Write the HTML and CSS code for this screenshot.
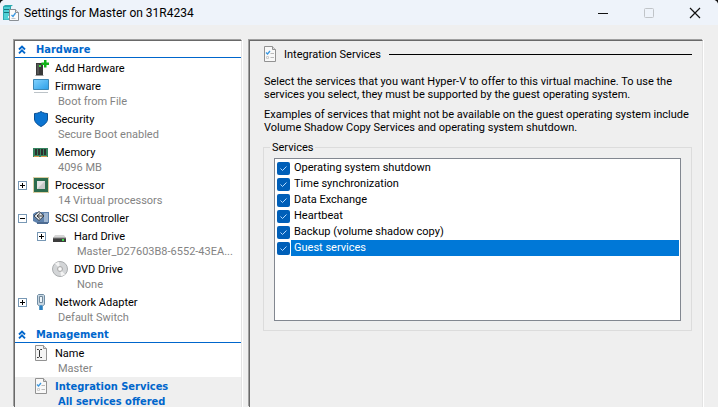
FILE: index.html
```html
<!DOCTYPE html>
<html lang="en">
<head>
<meta charset="utf-8">
<title>Settings for Master on 31R4234</title>
<link rel="stylesheet" href="styles.css">
</head>
<body>
<svg width="0" height="0" class="defs" aria-hidden="true">
  <symbol id="chevrons" viewBox="0 0 8 9"><path d="M1 4.500 4 1.500l3 3M1 8.300l3-3 3 3" fill="none" stroke="#06c" stroke-width="1.900"/></symbol>
  <symbol id="checklist" viewBox="0 0 16 16">
    <path d="M2.500.5h8l3 3v12h-11z" fill="#f8f8f8" stroke="#929292"/>
    <path d="M10.500.5v3h3" fill="#ddd" stroke="#929292"/>
    <path d="M4 6.500 5.500 8 8 5" fill="none" stroke="#3a97e0" stroke-width="1.300"/>
    <path d="M8.500 7.500H12M8.500 11.500H12" stroke="#bbb"/>
    <path d="M4.500 10.500h2v2h-2z" fill="none" stroke="#ccc"/>
  </symbol>
</svg>
<div class="window">
  <header class="titlebar">
    <svg class="app-icon" viewBox="0 0 16 16" aria-hidden="true">
      <path d="M0 1.500 2 0h8L8 1.500V15H0z" fill="#2aa9b0"/>
      <path d="M1 2h6v12.500H1z" fill="#4fd0d6"/>
      <path d="M1 4.500h6M1 7.500h6" stroke="#14747c"/>
      <path d="M5 11h2v2H5z" fill="#d5ffff"/>
      <path d="M6.500 4.500h6l3 3v8h-9z" fill="#fafafa" stroke="#8a8f94"/>
      <path d="M12.500 4.500v3h3" fill="#ddd" stroke="#8a8f94"/>
      <path d="m8.500 10 1.500 1.500L12.500 8" fill="none" stroke="#3a97e0" stroke-width="1.300"/>
      <path d="M8.500 13.500h4" stroke="#c0c4c8"/>
    </svg>
    <h1>Settings for Master on 31R4234</h1>
    <div class="window-controls">
      <button type="button" aria-label="Minimize"><svg viewBox="0 0 12 12"><path d="M1 6.500h10" stroke="#111"/></svg></button>
      <button type="button" aria-label="Maximize" disabled><svg viewBox="0 0 12 12"><rect x="1.500" y="1.500" width="9" height="9" rx="1" fill="none" stroke="#c0c4c8"/></svg></button>
      <button type="button" aria-label="Close"><svg viewBox="0 0 12 12"><path d="m1 1 10 10M11 1 1 11" stroke="#111" stroke-width="1.200"/></svg></button>
    </div>
  </header>
  <div class="panes">
    <nav class="pane tree">
      <h2><button type="button" class="section"><svg viewBox="0 0 8 9"><use href="#chevrons"/></svg>Hardware</button></h2>
      <ul>
        <li class="item">
          <svg class="icon" viewBox="0 0 16 16"><path d="M3 3h7v12H3z" fill="#3a3a3a"/><path d="M4 4h2v10H4z" fill="#555"/><path d="M2.500 15.500h8" stroke="#999"/><path d="M6 5h2v2H6z" fill="#4be04b"/><path d="M11 0h2.500v2.500H16V5h-2.500v2.500H11V5H8.500V2.500H11z" fill="#12b31a"/></svg>
          <a href="#add">Add Hardware</a>
        </li>
        <li class="item">
          <svg class="icon" viewBox="0 0 16 16"><defs><linearGradient id="screen" x2="1" y2="1"><stop stop-color="#83d3ff"/><stop offset="1" stop-color="#2b9fe8"/></linearGradient></defs><path d="M.5 1.500h15v10H.5z" fill="url(#screen)" stroke="#3c87b5"/><path d="M1 14.500h14" stroke="#bcc3c8"/></svg>
          <a href="#firmware">Firmware</a><span class="detail">Boot from File</span>
        </li>
        <li class="item">
          <svg class="icon" viewBox="0 0 16 16"><path d="M8 .5C6 2 3.500 2.500 1.500 2.500V8c0 3.500 3.500 6 6.500 7.500 3-1.500 6.500-4 6.500-7.500V2.500C12.500 2.500 10 2 8 .5z" fill="#0b74d1" stroke="#0a4f93"/></svg>
          <a href="#security">Security</a><span class="detail">Secure Boot enabled</span>
        </li>
        <li class="item">
          <svg class="icon" viewBox="0 0 16 16"><path d="M0 4h15v9H0z" fill="#35835f"/><path d="M2 5h2v6H2zM5 5h2v6H5zM8 5h2v6H8zM11 5h2v6h-2z" fill="#2b2f2d"/><path d="M1 12.500h5M8 12.500h6" stroke="#d99a4e"/></svg>
          <a href="#memory">Memory</a><span class="detail">4096 MB</span>
        </li>
        <li class="item">
          <button type="button" class="expander plus" aria-label="Expand Processor"></button>
          <svg class="icon" viewBox="0 0 16 16"><rect x=".5" y=".5" width="15" height="15" fill="none" stroke="#b59a45" stroke-dasharray="1 1"/><path d="M1 1h14v14H1z" fill="#2b6b4c"/><path d="M4 4h8v8H4z" fill="#e4e4e4"/><path d="M12 4v8H4z" fill="#c9c9c9"/></svg>
          <a href="#processor">Processor</a><span class="detail">14 Virtual processors</span>
        </li>
        <li class="item">
          <button type="button" class="expander" aria-label="Collapse SCSI Controller"></button>
          <svg class="icon" viewBox="0 0 16 16"><path d="M0 4 3 2h13v11H4l-4-2z" fill="#5f82ad"/><path d="M11 3h4v10h-4z" fill="#9fb6d1"/><path d="M6 1.500 1 6l5 4.500L11 6z" fill="#e6eaee" stroke="#39434e"/><path d="M4 6h6M7 3.500 4 6l3 2.500" fill="none" stroke="#333"/><path d="M4 13h11" stroke="#4d6b91" stroke-width="2"/></svg>
          <a href="#scsi">SCSI Controller</a>
        </li>
        <li class="item child">
          <button type="button" class="expander plus" aria-label="Expand Hard Drive"></button>
          <svg class="icon" viewBox="0 0 16 16"><path d="M3 7h9l2 3H1z" fill="#d6d6d6"/><path d="M1 10h13v4H1z" fill="#3c3c3c"/><path d="M1 10h13" stroke="#888"/><path d="M10 11h2v2h-2z" fill="#3fdc4a"/></svg>
          <a href="#disk">Hard Drive</a><span class="detail">Master_D27603B8-6552-43EA...</span>
        </li>
        <li class="item child">
          <svg class="icon" viewBox="0 0 16 16"><circle cx="8" cy="8" r="7.500" fill="#d3d5d7" stroke="#a9acae"/><path d="M8 8 3 2.500A7 7 0 0 1 7 1zM8 8l5 5.500A7 7 0 0 1 9 15z" fill="#f4f4f4"/><circle cx="8" cy="8" r="2.500" fill="#eee" stroke="#aaa"/><circle cx="8" cy="8" r="1" fill="#fff"/></svg>
          <a href="#dvd">DVD Drive</a><span class="detail">None</span>
        </li>
        <li class="item">
          <button type="button" class="expander plus" aria-label="Expand Network Adapter"></button>
          <svg class="icon" viewBox="0 0 16 16"><path d="M4.500 1.500 5.500.5h5l1 1v9l-2 1.500h-3l-2-1.500z" fill="#c6d6e2" stroke="#708ca3"/><path d="M6.500 2.500h3v6h-3z" fill="#eef5fa" stroke="#71889a"/><path d="M8 11.500V16" stroke="#5a9cc8" stroke-width="4"/><path d="M8 11.500V16" stroke="#2b7fc2" stroke-width="2"/></svg>
          <a href="#network">Network Adapter</a><span class="detail">Default Switch</span>
        </li>
      </ul>
      <h2><button type="button" class="section"><svg viewBox="0 0 8 9"><use href="#chevrons"/></svg>Management</button></h2>
      <ul>
        <li class="item">
          <svg class="icon" viewBox="0 0 16 16"><path d="M2.500.5h8l3 3v12h-11z" fill="#f4f4f4" stroke="#929292"/><path d="M10.500.5v3h3" fill="#ddd" stroke="#929292"/><path d="M4 4.500h1.500l1 1 1-1H9M4 12.500h1.500l1-1 1 1H9M6.500 5.500v6" fill="none" stroke="#333"/></svg>
          <a href="#name">Name</a><span class="detail">Master</span>
        </li>
        <li class="item selected">
          <svg class="icon" viewBox="0 0 16 16"><use href="#checklist"/></svg>
          <a href="#integration" aria-current="page">Integration Services</a><span class="detail">All services offered</span>
        </li>
      </ul>
    </nav>
    <main class="pane content">
      <div class="page-title">
        <svg class="icon" viewBox="0 0 16 16" aria-hidden="true"><use href="#checklist"/></svg>
        <h2>Integration Services</h2>
      </div>
      <p>Select the services that you want Hyper-V to offer to this virtual machine. To use the services you select, they must be supported by the guest operating system.</p>
      <p>Examples of services that might not be available on the guest operating system include Volume Shadow Copy Services and operating system shutdown.</p>
      <fieldset>
        <legend>Services</legend>
        <div class="services">
          <label><input type="checkbox" checked><span>Operating system shutdown</span></label>
          <label><input type="checkbox" checked><span>Time synchronization</span></label>
          <label><input type="checkbox" checked><span>Data Exchange</span></label>
          <label><input type="checkbox" checked><span>Heartbeat</span></label>
          <label><input type="checkbox" checked><span>Backup (volume shadow copy)</span></label>
          <label class="current"><input type="checkbox" checked><span>Guest services</span></label>
        </div>
      </fieldset>
    </main>
  </div>
</div>
</body>
</html>
```
FILE: styles.css
```css
* { box-sizing: border-box; }

body {
  margin: 0;
  background: #111;
  color: #000;
  font: 11px/13px Tahoma, Roboto, sans-serif;
}

h1, h2, p, ul { margin: 0; padding: 0; font: inherit; }
ul { list-style: none; }
button { padding: 0; border: 0; background: none; font: inherit; }
a { color: inherit; text-decoration: none; }
.defs { position: absolute; }

.window {
  display: flex;
  flex-direction: column;
  height: 100vh;
  overflow: hidden;
  border-radius: 5px 5px 0 0;
  background: #efefef;
}

.titlebar {
  display: flex;
  flex: none;
  align-items: center;
  height: 25px;
  padding-left: 3px;
  background: #eef3fa;
}
.app-icon { width: 16px; height: 16px; margin-right: 5px; }
.titlebar h1 { font: 12px/16px "Segoe UI", Roboto, sans-serif; }
.window-controls { display: flex; margin-left: auto; }
.window-controls button {
  display: grid;
  place-items: center;
  width: 46px;
  height: 25px;
}
.window-controls svg { width: 12px; height: 12px; }

.panes {
  display: grid;
  flex: 1;
  grid-template-columns: 228px 1fr;
  gap: 7px;
  min-height: 0;
  padding: 15px 15px 0 14px;
}
.pane {
  min-width: 0;
  overflow: hidden;
  border: 1px solid;
  border-color: #696969 #e3e3e3 #e3e3e3 #696969;
  border-bottom: 0;
  box-shadow: -1px -1px #a0a0a0, 1px 0 #fff;
}

.tree { background: #fff; }
.section {
  display: flex;
  align-items: center;
  gap: 10px;
  width: 100%;
  height: 17px;
  margin-bottom: 1px;
  padding-left: 3px;
  border-bottom: 1px solid #06c;
  color: #06c;
  font-family: Tahoma, "DejaVu Sans Condensed", sans-serif;
  font-weight: bold;
}
.section svg { width: 8px; height: 9px; }

.item {
  display: grid;
  grid-template-columns: 9px 16px 1fr;
  grid-template-rows: 18px;
  grid-auto-rows: 15px;
  column-gap: 6px;
  align-items: center;
  padding-left: 3px;
  white-space: nowrap;
}
.item.child { padding-left: 22px; }
.icon { width: 16px; height: 16px; }
.item .icon { grid-column: 2; grid-row: 1; }
.item a { grid-column: 3; grid-row: 1; }
.detail {
  grid-column: 3;
  grid-row: 2;
  align-self: start;
  padding-left: 3px;
  color: #838383;
}
.selected { background: #efefef; }
.selected a, .selected .detail {
  color: #06c;
  font-family: Tahoma, "DejaVu Sans Condensed", sans-serif;
  font-weight: bold;
}

.expander {
  grid-column: 1;
  grid-row: 1;
  width: 9px;
  height: 9px;
  border: 1px solid #7898b5;
  background: linear-gradient(#000, #000) center / 5px 1px no-repeat;
}
.expander.plus {
  background:
    linear-gradient(#000, #000) center / 5px 1px no-repeat,
    linear-gradient(#000, #000) center / 1px 5px no-repeat;
}

.content { padding: 5px 10px 0 12px; }
.page-title { display: flex; align-items: center; gap: 6px; margin-bottom: 13px; }
.page-title::after { content: ""; flex: 1; height: 1px; margin-left: 2px; background: #000; }
.content p { margin: 0 2px 7px; }

fieldset {
  min-width: 0;
  margin: 0 0 0 1px;
  padding: 4px 10px 9px;
  border: 1px solid #dcdcdc;
}
legend { margin-left: -4px; padding: 0 2px; }
.services {
  height: 163px;
  padding: 1px;
  border: 1px solid #828790;
  background: #fff;
}
.services label { display: flex; align-items: center; gap: 1px; height: 16px; padding-left: 1px; }
.services span { flex: 1; padding-left: 3px; line-height: 16px; }
.services .current span { background: #0078d7; color: #fff; }
.services input {
  width: 13px;
  height: 13px;
  margin: 0;
  border-radius: 2px;
  appearance: none;
  background: #005fb8 url("data:image/svg+xml,%3Csvg xmlns='http://www.w3.org/2000/svg' viewBox='0 0 13 13'%3E%3Cpath d='m3.500 6.500 2 2 4-4' fill='none' stroke='%23b8dcff'/%3E%3C/svg%3E") center / 13px no-repeat;
}
```
